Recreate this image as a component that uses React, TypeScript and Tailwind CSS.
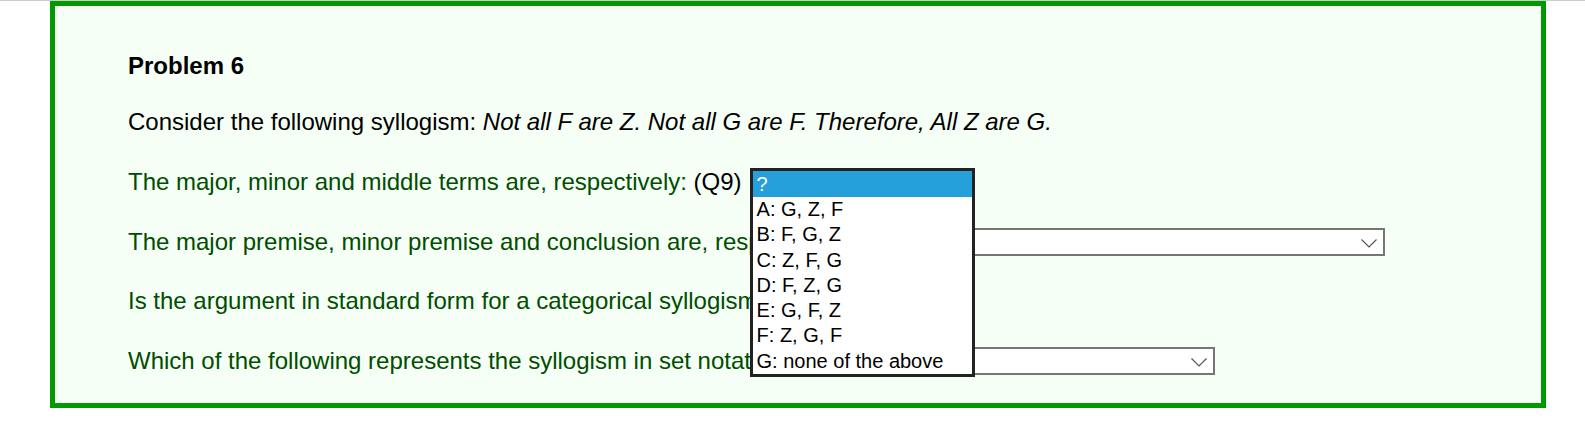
import React from "react";

function Chevron() {
  return (
    <svg width="16" height="9" viewBox="0 0 16 9" className="absolute right-[6px] top-[9px]">
      <polyline points="0.5,0.5 8,8 15.5,0.5" fill="none" stroke="#555555" strokeWidth="1.2" />
    </svg>
  );
}

function SelectBox({ w }: { w: string }) {
  return (
    <div className={`relative h-[28px] ${w} bg-white border-2 border-[#767676] shrink-0`}>
      <Chevron />
    </div>
  );
}

const options = [
  "A: G, Z, F",
  "B: F, G, Z",
  "C: Z, F, G",
  "D: F, Z, G",
  "E: G, F, Z",
  "F: Z, G, F",
  "G: none of the above",
];

export default function App() {
  return (
    <div
      className="min-h-[425px] bg-white border-t border-[#cccccc]"
      style={{ fontFamily: '"Liberation Sans", Arial, sans-serif' }}
    >
      <div className="ml-[50px] w-[1496px] h-[407px] border-[5px] border-[#009900] bg-[#f5fff5] pl-[73px] pt-[46px] text-[24px] leading-[28px] text-black">
        <div className="font-bold h-[28px]">Problem 6</div>
        <div className="mt-[28px] h-[28px]">
          Consider the following syllogism:{" "}
          <i>Not all F are Z. Not all G are F. Therefore, All Z are G.</i>
        </div>
        <div className="mt-[32px] flex flex-col gap-[31.5px]">
          <div className="flex items-center h-[28px] whitespace-nowrap">
            <span className="text-[#004d00]">The major, minor and middle terms are, respectively:</span>
            <span>&nbsp;(Q9)</span>
            <div className="relative ml-[7px] w-[225px] h-[28px] shrink-0">
              <div className="absolute left-[1px] top-0 z-10 w-[225px] bg-white border-[3px] border-[#222222] text-[20px] leading-[25.3px] text-black">
                <div className="bg-[#26a0da] text-white pl-[4px] h-[26px] leading-[26px]">?</div>
                {options.map((o) => (
                  <div key={o} className="pl-[4px] h-[25.3px]">
                    {o}
                  </div>
                ))}
              </div>
            </div>
          </div>
          <div className="flex items-center h-[28px] whitespace-nowrap">
            <span className="text-[#004d00]">
              The major premise, minor premise and conclusion are, respectively:
            </span>
            <span>&nbsp;(Q10)</span>
            <div className="ml-[7px]">
              <SelectBox w="w-[462px]" />
            </div>
          </div>
          <div className="flex items-center h-[28px] whitespace-nowrap">
            <span className="text-[#004d00]">
              Is the argument in standard form for a categorical syllogism?
            </span>
            <span>&nbsp;(Q11)</span>
            <div className="ml-[7px]">
              <SelectBox w="w-[100px]" />
            </div>
          </div>
          <div className="flex items-center h-[28px] whitespace-nowrap">
            <span className="text-[#004d00]">
              Which of the following represents the syllogism in set notation?
            </span>
            <span>&nbsp;(Q12)</span>
            <div className="ml-[7px]">
              <SelectBox w="w-[344px]" />
            </div>
          </div>
        </div>
      </div>
    </div>
  );
}
